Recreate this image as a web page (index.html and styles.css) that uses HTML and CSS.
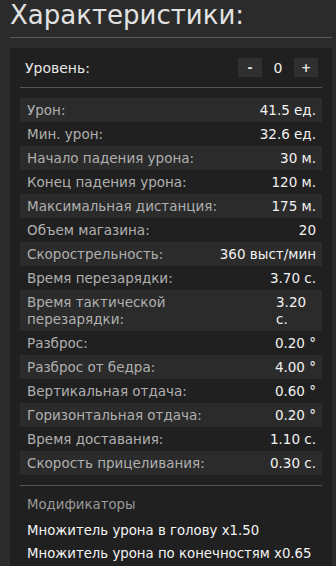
FILE: index.html
```html
<!DOCTYPE html>
<html lang="ru">
<head>
<meta charset="utf-8">
<link rel="stylesheet" href="styles.css">
</head>
<body>
<h1 class="title">Характеристики:</h1>
<section class="panel">
  <div class="level">
    <span class="level-label">Уровень:</span>
    <div class="stepper">
      <button class="step-btn">-</button>
      <span class="level-value">0</span>
      <button class="step-btn">+</button>
    </div>
  </div>
  <div class="stats">
    <div class="row"><span class="label">Урон:</span><span class="value">41.5 ед.</span></div>
    <div class="row"><span class="label">Мин. урон:</span><span class="value">32.6 ед.</span></div>
    <div class="row"><span class="label">Начало падения урона:</span><span class="value">30 м.</span></div>
    <div class="row"><span class="label">Конец падения урона:</span><span class="value">120 м.</span></div>
    <div class="row"><span class="label">Максимальная дистанция:</span><span class="value">175 м.</span></div>
    <div class="row"><span class="label">Объем магазина:</span><span class="value">20</span></div>
    <div class="row"><span class="label">Скорострельность:</span><span class="value">360 выст/мин</span></div>
    <div class="row"><span class="label">Время перезарядки:</span><span class="value">3.70 с.</span></div>
    <div class="row row-wrap"><span class="label">Время тактической перезарядки:</span><span class="value">3.20 с.</span></div>
    <div class="row"><span class="label">Разброс:</span><span class="value">0.20 °</span></div>
    <div class="row"><span class="label">Разброс от бедра:</span><span class="value">4.00 °</span></div>
    <div class="row"><span class="label">Вертикальная отдача:</span><span class="value">0.60 °</span></div>
    <div class="row"><span class="label">Горизонтальная отдача:</span><span class="value">0.20 °</span></div>
    <div class="row"><span class="label">Время доставания:</span><span class="value">1.10 с.</span></div>
    <div class="row"><span class="label">Скорость прицеливания:</span><span class="value">0.30 с.</span></div>
  </div>
  <div class="mods">
    <div class="mods-title">Модификаторы</div>
    <div class="mod">Множитель урона в голову x1.50</div>
    <div class="mod">Множитель урона по конечностям x0.65</div>
  </div>
</section>
</body>
</html>
```
FILE: styles.css
```css
html, body {
  margin: 0;
  background: #2b2b2b;
  font-family: "DejaVu Sans", sans-serif;
}
body {
  padding: 0 4px 0 10px;
}
.title {
  margin: 0;
  padding: 0 0 7px 0;
  font-size: 26px;
  line-height: 30px;
  font-weight: normal;
  color: #e2e2e2;
  border-bottom: 1px solid #5a5a5a;
}
.panel {
  margin-top: 10px;
  background: #202020;
  padding: 10px 10px 0 10px;
}
.level {
  display: flex;
  justify-content: space-between;
  align-items: center;
  height: 19px;
  padding: 0 4px 0 5px;
  margin-bottom: 10px;
}
.level-label {
  color: #e6e6e6;
  font-size: 14px;
}
.stepper {
  display: flex;
  align-items: center;
}
.step-btn {
  width: 24px;
  height: 19px;
  border: 0;
  padding: 0;
  background: #2f2f2f;
  color: #e8e8e8;
  font-family: inherit;
  font-size: 12px;
  font-weight: bold;
}
.level-value {
  width: 32px;
  text-align: center;
  color: #f0f0f0;
  font-size: 14px;
}
.stats {
  border-top: 1px solid #555;
  padding-top: 10px;
}
.row {
  display: flex;
  justify-content: space-between;
  gap: 8px;
  padding: 3.5px 6px 3.5px 7px;
  font-size: 13.5px;
  line-height: 17px;
}
.row:nth-child(odd) {
  background: #2b2b2b;
}
.row-wrap .label {
  max-width: 190px;
}
.row-wrap .value {
  width: 40px;
}
.label {
  color: #b0b0b0;
}
.value {
  color: #f2f2f2;
}
.mods {
  margin-top: 10px;
  border-top: 1px solid #555;
  padding: 10px 0 10px 7px;
  font-size: 13.3px;
  line-height: 17px;
}
.mods-title {
  color: #9a9a9a;
  margin-bottom: 9px;
}
.mod {
  color: #f4f4f4;
  margin-bottom: 6px;
  white-space: nowrap;
}
```
